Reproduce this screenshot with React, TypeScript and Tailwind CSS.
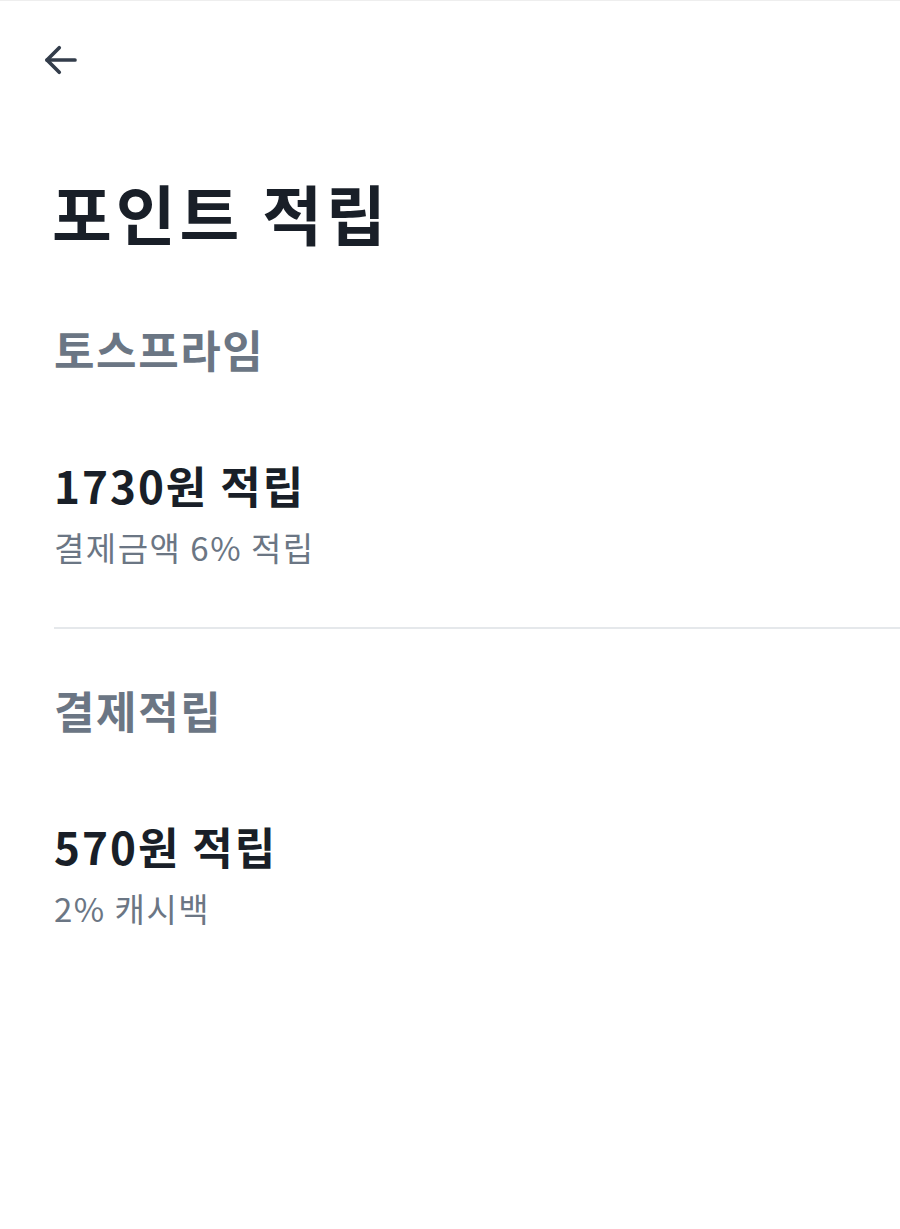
import React from "react";

const font = { fontFamily: '"Noto Sans CJK KR", "Noto Sans", sans-serif' };

function Section({ title, amount, desc }: { title: string; amount: string; desc: string }) {
  return (
    <div className="px-[54px]">
      <div className="flex h-[60px] items-center text-[44px] font-bold leading-none tracking-[1.6px] text-[#6b7684]">{title}</div>
      <div className="mt-[76px] flex h-[60px] items-center text-[44px] font-bold leading-none tracking-[2px] text-[#191f28]">{amount}</div>
      <div className="mt-[10px] flex h-[44px] items-center text-[33px] leading-none tracking-[1.5px] text-[#6b7684]">{desc}</div>
    </div>
  );
}

export default function App() {
  return (
    <div className="min-h-[1229px] w-[900px] bg-white border-t border-[#eeeeee]" style={font}>
      <div className="pl-[40px] pt-[38px]">
        <svg width="42" height="42" viewBox="0 0 24 24" fill="none" stroke="#333d4b" strokeWidth="2.1" strokeLinecap="round" strokeLinejoin="round">
          <path d="M20 12H4" />
          <path d="M11 5l-7 7 7 7" />
        </svg>
      </div>
      <div className="mt-[93px] flex h-[76px] items-center px-[52px] text-[65px] font-bold leading-none tracking-[4px] text-[#191f28]">포인트 적립</div>
      <div className="mt-[69px]">
        <Section title="토스프라임" amount="1730원 적립" desc="결제금액 6% 적립" />
      </div>
      <div className="ml-[54px] mt-[58px] h-[2px] bg-[#e5e8eb]" />
      <div className="mt-[51px]">
        <Section title="결제적립" amount="570원 적립" desc="2% 캐시백" />
      </div>
    </div>
  );
}
